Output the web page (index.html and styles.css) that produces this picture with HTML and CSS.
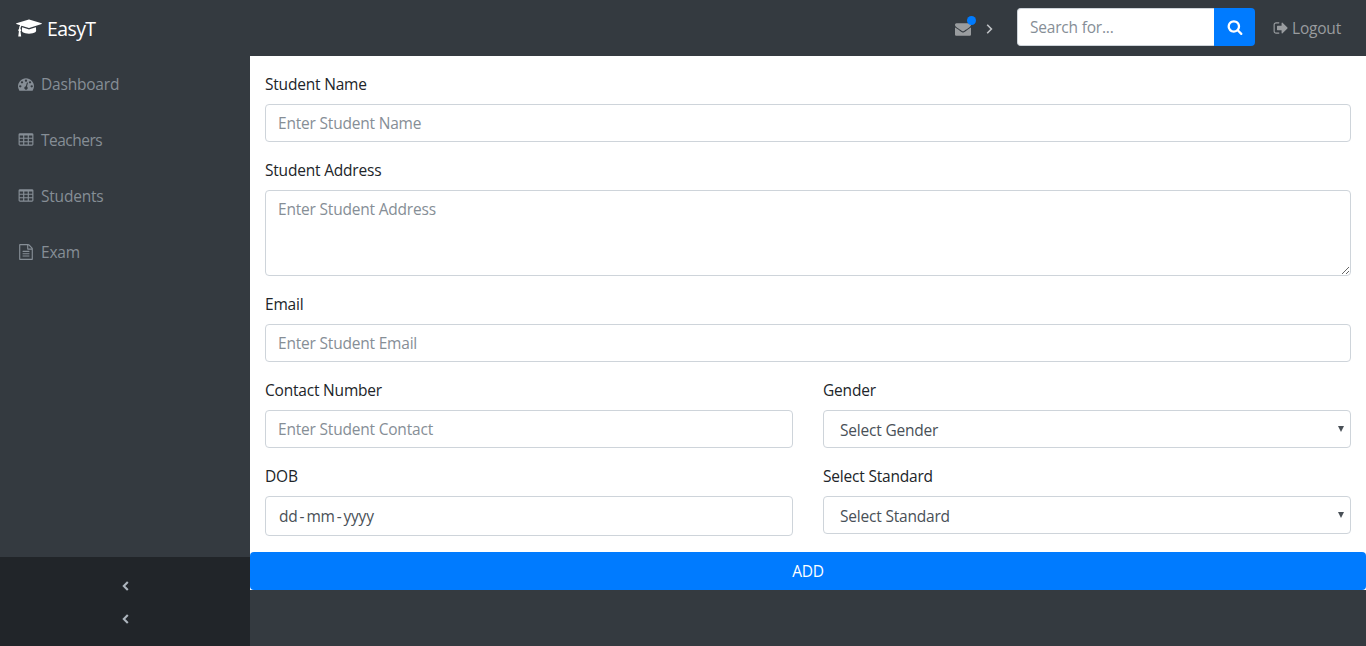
FILE: index.html
```html
<!DOCTYPE html>
<html lang="en">
<head>
<meta charset="utf-8">
<title>EasyT</title>
<link rel="stylesheet" href="styles.css">
</head>
<body>
<svg class="defs" width="0" height="0">
  <symbol id="table" viewBox="0 0 1792 1792"><path fill-rule="evenodd" d="M224 128h1344q66 0 113 47t47 113v1088q0 66-47 113t-113 47h-1344q-66 0-113-47t-47-113v-1088q0-66 47-113t113-47zM192 384v256h384v-256zM704 384v256h384v-256zM1216 384v256h384v-256zM192 768v256h384v-256zM704 768v256h384v-256zM1216 768v256h384v-256zM192 1152v256h384v-256zM704 1152v256h384v-256zM1216 1152v256h384v-256z"/></symbol>
</svg>
<header class="topbar">
  <a class="brand"><svg class="cap" viewBox="0 0 2304 1792"><path d="M1774 836l18 316q4 69-82 128t-235 93.500-323 34.500-323-34.500-235-93.500-82-128l18-316 574 181q22 7 48 7t48-7zM2304 512q0 23-22 31l-1120 352q-4 1-10 1t-10-1l-652-206q-43 34-71 111.500t-34 178.500q63 36 63 109 0 69-58 107l58 433q2 14-8 25-9 11-24 11h-192q-15 0-24-11-10-11-8-25l58-433q-58-38-58-107 0-73 65-111 11-207 98-330l-333-104q-22-8-22-31t22-31l1120-352q4-1 10-1t10 1l1120 352q22 8 22 31z"/></svg><span>EasyT</span></a>
  <div class="tools">
    <a class="mail"><svg class="icon" viewBox="0 0 1792 1792"><path d="M1792 710v794q0 66-47 113t-113 47h-1472q-66 0-113-47t-47-113v-794q44 49 101 87 362 246 497 345 57 42 92.500 65.500t94.500 48 110 24.500h2q51 0 110-24.500t94.500-48 92.500-65.500q170-123 498-345 57-39 100-87zm0-294q0 79-49 151t-122 123q-376 261-468 325-10 7-42.500 31t-54 38.500-52 32.500-57.500 27-50 9h-2q-23 0-50-9t-57.500-27-52-32.500-54-38.500-42.500-31q-91-64-262-182.500t-205-142.500q-62-42-117-115.500t-55-136.500q0-78 41.500-130t118.500-52h1472q65 0 112.500 47t47.500 113z"/></svg><i class="dot"></i></a>
    <svg class="angle" viewBox="0 0 7 10"><path d="M1.200 .8L5.400 5L1.200 9.200"/></svg>
    <div class="search"><input class="search-field" type="text" placeholder="Search for..."><button class="search-btn"><svg class="icon" viewBox="0 0 1792 1792"><path d="M1216 832q0-185-131.500-316.500t-316.500-131.500-316.500 131.500-131.500 316.500 131.500 316.500 316.500 131.500 316.500-131.500 131.500-316.500zm512 832q0 52-38 90t-90 38q-54 0-90-38l-343-342q-179 124-399 124-143 0-273.500-55.500t-225-150-150-225-55.500-273.500 55.500-273.500 150-225 225-150 273.500-55.500 273.500 55.500 225 150 150 225 55.500 273.500q0 220-124 399l343 343q37 37 37 90z"/></svg></button></div>
    <a class="logout"><svg class="icon" viewBox="0 0 1792 1792"><path d="M704 1440q0 4 1 20t.5 26.500-3 23.500-10 19.500-20.500 6.500h-320q-119 0-203.500-84.500t-84.500-203.500v-704q0-119 84.500-203.500t203.500-84.500h320q13 0 22.500 9.500t9.500 22.500q0 4 1 20t.5 26.500-3 23.500-10 19.500-20.500 6.500h-320q-66 0-113 47t-47 113v704q0 66 47 113t113 47h312l11.500 1 11.500 3 8 5.500 7 9 2 13.500zm928-544q0 26-19 45l-544 544q-19 19-45 19t-45-19-19-45v-288h-448q-26 0-45-19t-19-45v-384q0-26 19-45t45-19h448v-288q0-26 19-45t45-19 45 19l544 544q19 19 19 45z"/></svg><span>Logout</span></a>
  </div>
</header>
<div class="layout">
  <aside class="sidebar">
    <nav class="menu">
      <a class="item"><svg class="icon" viewBox="0 0 1792 1792"><path d="M384 1152q0-53-37.500-90.500t-90.500-37.500-90.500 37.500-37.500 90.500 37.500 90.500 90.500 37.500 90.500-37.500 37.500-90.500zm192-448q0-53-37.500-90.500t-90.500-37.500-90.500 37.500-37.500 90.500 37.500 90.500 90.500 37.500 90.500-37.500 37.500-90.500zm428 481l101-382q6-26-7.500-48.500t-38.500-29.500-48 6.500-30 39.500l-101 382q-60 5-107 43.500t-63 98.500q-20 77 20 146t117 89 146-20 89-117q16-60-6-117t-72-91zm660-33q0-53-37.500-90.500t-90.500-37.500-90.500 37.500-37.500 90.500 37.500 90.500 90.500 37.500 90.500-37.500 37.500-90.500zm-640-640q0-53-37.500-90.500t-90.500-37.500-90.500 37.500-37.500 90.500 37.500 90.500 90.500 37.500 90.500-37.500 37.500-90.500zm448 192q0-53-37.500-90.500t-90.500-37.500-90.500 37.500-37.500 90.500 37.500 90.500 90.500 37.500 90.500-37.500 37.500-90.500zm320 448q0 261-141 483-19 29-54 29h-1402q-35 0-54-29-141-221-141-483 0-182 71-348t191-286 286-191 348-71 348 71 286 191 191 286 71 348z"/></svg><span>Dashboard</span></a>
      <a class="item"><svg class="icon"><use href="#table"/></svg><span class="tight">Teachers</span></a>
      <a class="item"><svg class="icon"><use href="#table"/></svg><span>Students</span></a>
      <a class="item"><svg class="icon" viewBox="0 0 1792 1792"><path d="M1596 380q28 28 48 76t20 88v1152q0 40-28 68t-68 28h-1344q-40 0-68-28t-28-68v-1600q0-40 28-68t68-28h896q40 0 88 20t76 48zm-444-244v376h376q-10-29-22-41l-313-313q-12-12-41-22zm384 1528v-1024h-416q-40 0-68-28t-28-68v-416h-768v1536h1280zm-1024-864q0-14 9-23t23-9h704q14 0 23 9t9 23v64q0 14-9 23t-23 9h-704q-14 0-23-9t-9-23v-64zm736 224q14 0 23 9t9 23v64q0 14-9 23t-23 9h-704q-14 0-23-9t-9-23v-64q0-14 9-23t23-9h704zm0 256q14 0 23 9t9 23v64q0 14-9 23t-23 9h-704q-14 0-23-9t-9-23v-64q0-14 9-23t23-9h704z"/></svg><span>Exam</span></a>
    </nav>
    <div class="toggler">
      <svg class="chevron" viewBox="0 0 7 10"><path d="M5.800 .9L1.800 5L5.800 9.100"/></svg>
      <svg class="chevron" viewBox="0 0 7 10"><path d="M5.800 .9L1.800 5L5.800 9.100"/></svg>
    </div>
  </aside>
  <main class="content">
    <form class="form">
      <div class="fields">
        <div class="group wide"><label class="label">Student Name</label><input class="control" type="text" placeholder="Enter Student Name"></div>
        <div class="group wide"><label class="label">Student Address</label><textarea class="control area" placeholder="Enter Student Address"></textarea></div>
        <div class="group wide"><label class="label">Email</label><input class="control" type="text" placeholder="Enter Student Email"></div>
        <div class="group"><label class="label">Contact Number</label><input class="control" type="text" placeholder="Enter Student Contact"></div>
        <div class="group"><label class="label">Gender</label><div class="control select"><span>Select Gender</span><svg class="arrow" viewBox="0 0 6 6"><path d="M0 0h6L3 6z"/></svg></div></div>
        <div class="group"><label class="label">DOB</label><div class="control date">dd<span class="sep">-</span>mm<span class="sep">-</span>yyyy</div></div>
        <div class="group"><label class="label">Select Standard</label><div class="control select"><span>Select Standard</span><svg class="arrow" viewBox="0 0 6 6"><path d="M0 0h6L3 6z"/></svg></div></div>
      </div>
      <button class="add" type="button">ADD</button>
    </form>
  </main>
</div>
</body>
</html>
```

FILE: styles.css
```css
* { box-sizing: border-box; }
body {
  margin: 0;
  height: 646px;
  overflow: hidden;
  display: flex;
  flex-direction: column;
  background: #343a40;
  color: #212529;
  font: 15.5px/24px "Open Sans", "Noto Sans", sans-serif;
  letter-spacing: -0.2px;
}
input, textarea, button { font: inherit; letter-spacing: inherit; margin: 0; outline: 0; }
svg { display: block; fill: currentColor; flex: none; }
.defs { position: absolute; }
.icon { width: 16px; height: 16px; }

.topbar { height: 56px; flex: none; display: flex; justify-content: space-between; align-items: center; padding: 0 24px 0 16px; }
.brand { display: flex; align-items: center; gap: 5px; color: #fff; font-size: 19.5px; line-height: 30px; letter-spacing: -0.6px; padding-top: 2px; }
.cap { width: 26px; height: 20px; margin-top: -2px; }
.tools { display: flex; align-items: center; color: #999c9f; }
.mail { position: relative; padding-top: 1px; }
.dot { position: absolute; width: 9px; height: 9px; left: 12px; top: -4px; border-radius: 50%; background: #007bff; }
.angle { width: 7px; height: 10px; margin: 2px 24px 0 15px; }
.angle path, .chevron path { fill: none; stroke: #c0c3c6; stroke-width: 1.6; }
.search { display: flex; height: 38px; margin: -2px 18px 0 0; }
.search-field { width: 197px; height: 38px; padding: 6px 12px; border: 1px solid #ced4da; border-right: 0; border-radius: 4px 0 0 4px; background: #fff; }
.search-btn { width: 41px; height: 38px; padding: 0; display: flex; align-items: center; justify-content: center; border: 0; border-radius: 0 4px 4px 0; background: #007bff; color: #fff; }
.logout { display: flex; align-items: center; gap: 3px; width: 69px; white-space: nowrap; }

.layout { flex: 1; min-height: 0; display: flex; }
.sidebar { width: 250px; flex: none; display: flex; flex-direction: column; justify-content: space-between; color: #868e96; }
.item { display: flex; align-items: center; gap: 7px; height: 56px; padding: 0 18px; }
.tight { letter-spacing: -0.5px; }
.toggler { height: 89px; background: #212529; display: flex; flex-direction: column; align-items: center; gap: 23px; padding-top: 24px; }
.chevron { width: 7px; height: 10px; }
.chevron path { stroke: #adb5bd; stroke-width: 2.1; }

.content { flex: 1; }
.form { background: #fff; }
.fields { display: grid; grid-template-columns: 1fr 1fr; column-gap: 30px; row-gap: 16px; padding: 16px 15px; }
.group { display: flex; flex-direction: column; gap: 8px; }
.wide { grid-column: span 2; }
.label { display: block; height: 24px; }
.control { width: 100%; height: 38px; padding: 6px 12px; border: 1px solid #ced4da; border-radius: 4px; background: #fff; color: #495057; }
.area { height: 86px; resize: vertical; display: block; }
::placeholder { color: #868e96; opacity: 1; }
.select { display: flex; justify-content: space-between; align-items: center; padding: 8px 6px 6px 16px; }
.arrow { width: 6px; height: 6px; margin-top: -2px; }
.date { height: 40px; padding: 7px 13px; }
.sep { padding: 0 2px; }
.add { display: block; width: 100%; height: 38px; padding: 0; border: 0; border-radius: 4px; background: #007bff; color: #fff; }
```
